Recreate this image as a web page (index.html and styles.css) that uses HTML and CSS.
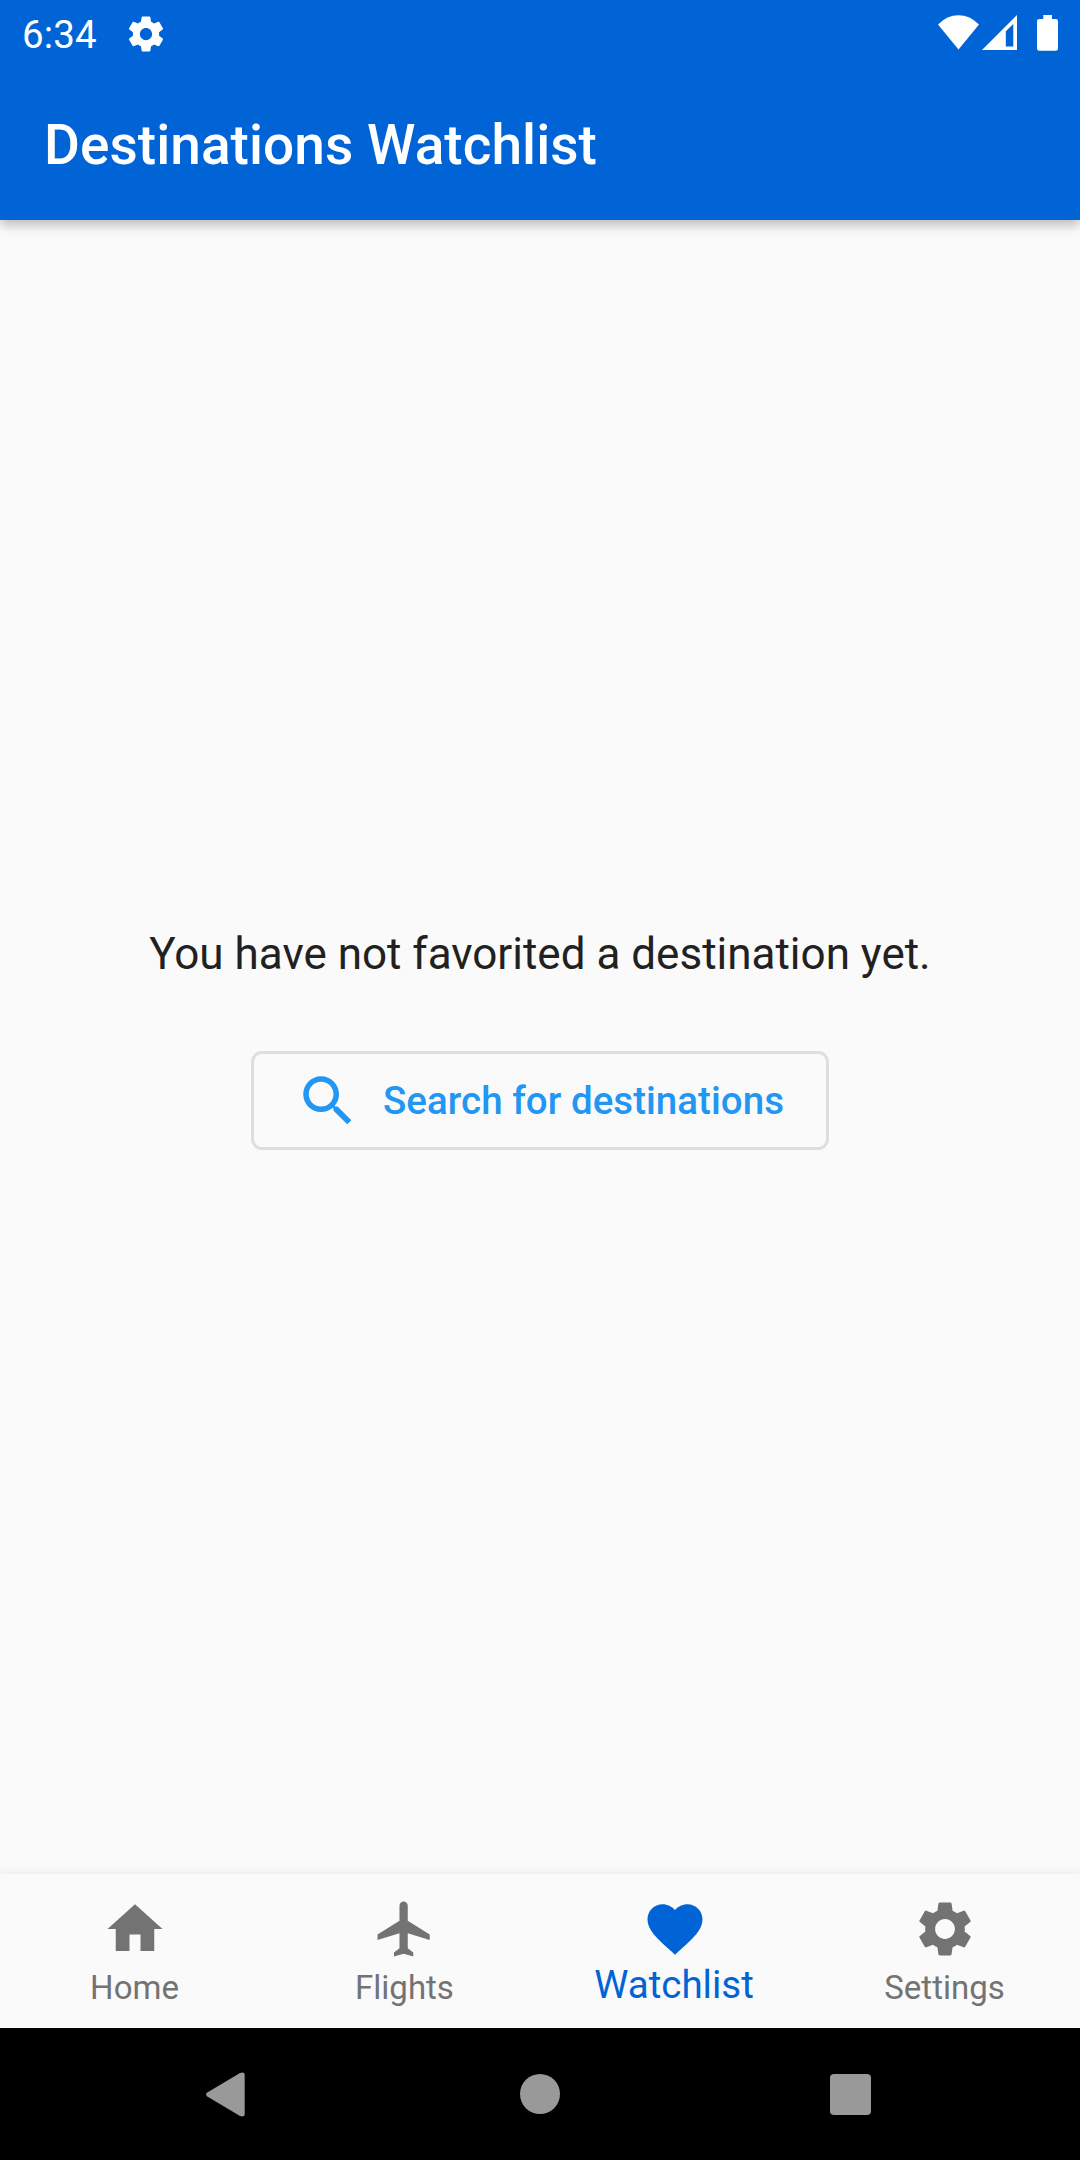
FILE: index.html
```html
<!DOCTYPE html>
<html lang="en">
<head>
<meta charset="utf-8">
<title>Destinations Watchlist</title>
<link rel="stylesheet" href="styles.css">
</head>
<body>
<div class="screen">
  <header class="app-header">
    <div class="status-bar">
      <span class="clock">6:34</span>
      <svg class="status-gear" viewBox="0 0 24 24"><path d="M19.43 12.98c.04-.32.07-.64.07-.98s-.03-.66-.07-.98l2.11-1.65c.19-.15.24-.42.12-.64l-2-3.46c-.12-.22-.39-.3-.61-.22l-2.49 1c-.52-.4-1.08-.73-1.69-.98l-.38-2.65C14.46 2.18 14.25 2 14 2h-4c-.25 0-.46.18-.49.42l-.38 2.65c-.61.25-1.17.59-1.69.98l-2.49-1c-.23-.09-.49 0-.61.22l-2 3.46c-.13.22-.07.49.12.64l2.11 1.65c-.04.32-.07.65-.07.98s.03.66.07.98l-2.11 1.65c-.19.15-.24.42-.12.64l2 3.46c.12.22.39.3.61.22l2.49-1c.52.4 1.08.73 1.69.98l.38 2.65c.03.24.24.42.49.42h4c.25 0 .46-.18.49-.42l.38-2.65c.61-.25 1.17-.59 1.69-.98l2.49 1c.23.09.49 0 .61-.22l2-3.46c.12-.22.07-.49-.12-.64l-2.11-1.65zM12 15.5c-1.93 0-3.5-1.57-3.5-3.5s1.57-3.5 3.5-3.5 3.5 1.57 3.5 3.5-1.57 3.5-3.5 3.5z"/></svg>
      <div class="indicators">
        <svg class="wifi" viewBox="0 0 41 36"><path d="M20.5 34.6 0 9.5Q9 .3 20.5.3T41 9.5z"/></svg>
        <svg class="signal" viewBox="0 0 35 36"><path fill-rule="evenodd" d="M0 35 35 0V35zM23.8 16.3V31.5H31.3V9z"/></svg>
        <svg class="battery" viewBox="0 0 21 36"><path d="M6.3 0h8.6v4h3.9Q21 4 21 6.2v27.3Q21 35.7 18.8 35.7H2.2Q0 35.7 0 33.5V6.2Q0 4 2.2 4h4.1z"/></svg>
      </div>
    </div>
    <h1 class="title">Destinations Watchlist</h1>
  </header>

  <main class="content">
    <p class="message">You have not favorited a destination yet.</p>
    <button class="search-button" type="button">
      <svg class="icon" viewBox="0 0 24 24"><path d="M15.5 14h-.79l-.28-.27C15.41 12.59 16 11.11 16 9.5 16 5.91 13.09 3 9.5 3S3 5.91 3 9.5 5.91 16 9.5 16c1.61 0 3.09-.59 4.23-1.57l.27.28v.79l5 4.99L20.49 19l-4.99-5zm-6 0C7.01 14 5 11.99 5 9.5S7.01 5 9.5 5 14 7.01 14 9.5 11.99 14 9.5 14z"/></svg>
      <span class="search-label">Search for destinations</span>
    </button>
  </main>

  <nav class="tabs">
    <a class="tab">
      <svg class="icon" viewBox="0 0 24 24"><path d="M10 20v-6h4v6h5v-8h3L12 3 2 12h3v8z"/></svg>
      <span class="tab-label">Home</span>
    </a>
    <a class="tab">
      <svg class="icon" viewBox="0 0 24 24"><path d="M21 16v-2l-8-5V3.5c0-.83-.67-1.5-1.5-1.5S10 2.67 10 3.5V9l-8 5v2l8-2.5V19l-2 1.5V22l3.5-1 3.5 1v-1.5L13 19v-5.5l8 2.5z"/></svg>
      <span class="tab-label">Flights</span>
    </a>
    <a class="tab tab-active">
      <svg class="icon" viewBox="0 0 24 24"><path d="M12 21.35l-1.45-1.32C5.4 15.36 2 12.28 2 8.5 2 5.42 4.42 3 7.5 3c1.74 0 3.41.81 4.5 2.09C13.09 3.81 14.76 3 16.5 3 19.58 3 22 5.42 22 8.5c0 3.78-3.4 6.86-8.55 11.54L12 21.35z"/></svg>
      <span class="tab-label">Watchlist</span>
    </a>
    <a class="tab">
      <svg class="icon" viewBox="0 0 24 24"><path d="M19.14 12.94c.04-.3.06-.61.06-.94 0-.32-.02-.64-.07-.94l2.03-1.58c.18-.14.23-.41.12-.61l-1.92-3.32c-.12-.22-.37-.29-.59-.22l-2.39.96c-.5-.38-1.03-.7-1.62-.94l-.36-2.54c-.04-.24-.24-.41-.48-.41h-3.84c-.24 0-.43.17-.47.41l-.36 2.54c-.59.24-1.13.57-1.62.94l-2.39-.96c-.22-.08-.47 0-.59.22L2.74 8.87c-.12.21-.08.47.12.61l2.03 1.58c-.05.3-.09.63-.09.94s.02.64.07.94l-2.03 1.58c-.18.14-.23.41-.12.61l1.92 3.32c.12.22.37.29.59.22l2.39-.96c.5.38 1.03.7 1.62.94l.36 2.54c.05.24.24.41.48.41h3.84c.24 0 .44-.17.47-.41l.36-2.54c.59-.24 1.13-.56 1.62-.94l2.39.96c.22.08.47 0 .59-.22l1.92-3.32c.12-.22.07-.47-.12-.61l-2.01-1.58zM12 15.6c-1.98 0-3.6-1.62-3.6-3.6s1.62-3.6 3.6-3.6 3.6 1.62 3.6 3.6-1.62 3.6-3.6 3.6z"/></svg>
      <span class="tab-label">Settings</span>
    </a>
  </nav>

  <footer class="system-nav">
    <svg class="nav-back" viewBox="0 0 39 45"><path d="M1.3 20.4 34 .9Q38.7-.7 38.7 3.2V41.8Q38.7 45.7 34 44.1L1.3 24.6Q-1.2 22.5 1.3 20.4z"/></svg>
    <span class="nav-home"></span>
    <span class="nav-recent"></span>
  </footer>
</div>
</body>
</html>
```
FILE: styles.css
```css
* { box-sizing: border-box; }

body {
  margin: 0;
  background: #fafafa;
  color: #212121;
  font-family: Roboto, "Noto Sans", sans-serif;
}

svg {
  display: block;
  flex: none;
  fill: currentColor;
}

.screen {
  display: flex;
  flex-direction: column;
  width: 1080px;
  height: 2160px;
  overflow: hidden;
}

.app-header {
  z-index: 1;
  height: 220px;
  background: #0064d6;
  color: #fff;
  box-shadow: 0 5px 11px rgba(0, 0, 0, .26);
}

.status-bar {
  display: flex;
  align-items: center;
  height: 66px;
  padding: 0 22px;
}

.clock {
  width: 103.4px;
  padding-top: 4px;
  font-size: 38.5px;
  line-height: 46px;
  letter-spacing: .1px;
}

.status-gear { width: 42px; height: 42px; margin-top: 1px; }

.indicators {
  display: flex;
  margin-left: auto;
}

.wifi { width: 41px; height: 36px; margin-right: 3px; }
.signal { width: 35px; height: 36px; margin-right: 20px; }
.battery { width: 21px; height: 36px; }

.title {
  margin: 0;
  padding: 1px 44px 0;
  font-size: 55px;
  font-weight: 500;
  letter-spacing: .05px;
  line-height: 156px;
}

.content {
  display: flex;
  flex: 1;
  flex-direction: column;
  align-items: center;
  justify-content: center;
  padding-bottom: 16px;
}

.message {
  margin: 0 0 71px;
  font-size: 44px;
  line-height: 52px;
  white-space: nowrap;
}

.search-button {
  display: flex;
  align-items: center;
  gap: 22px;
  width: 578px;
  height: 99px;
  padding: 0 41px;
  border: 3px solid #dedede;
  border-radius: 11px;
  background: transparent;
  color: #2196f3;
  font: 500 38.5px/46px Roboto, "Noto Sans", sans-serif;
  letter-spacing: .03px;
  white-space: nowrap;
}

.icon { width: 66px; height: 66px; }

.tabs {
  display: grid;
  grid-template-columns: repeat(4, 1fr);
  height: 154px;
  background: #fafafa;
  box-shadow: 0 -2px 8px rgba(0, 0, 0, .06);
}

.tab {
  display: flex;
  flex-direction: column;
  align-items: center;
  padding-top: 22px;
  color: #737373;
}

.tab-label {
  margin-top: 6px;
  padding-right: 1px;
  font-size: 33px;
  line-height: 40px;
}

.tab-active { color: #0064d6; }
.tab-active .tab-label { margin-top: 3px; padding-right: 2px; font-size: 38.5px; }

.system-nav {
  display: flex;
  align-items: center;
  justify-content: space-between;
  height: 132px;
  padding: 0 209px 0 206px;
  background: #000;
  color: #999;
}

.nav-back { width: 39px; height: 45px; }

.nav-home {
  width: 40px;
  height: 40px;
  margin-left: 5px;
  border-radius: 50%;
  background: currentColor;
}

.nav-recent {
  width: 41px;
  height: 41px;
  border-radius: 4px;
  background: currentColor;
}
```
